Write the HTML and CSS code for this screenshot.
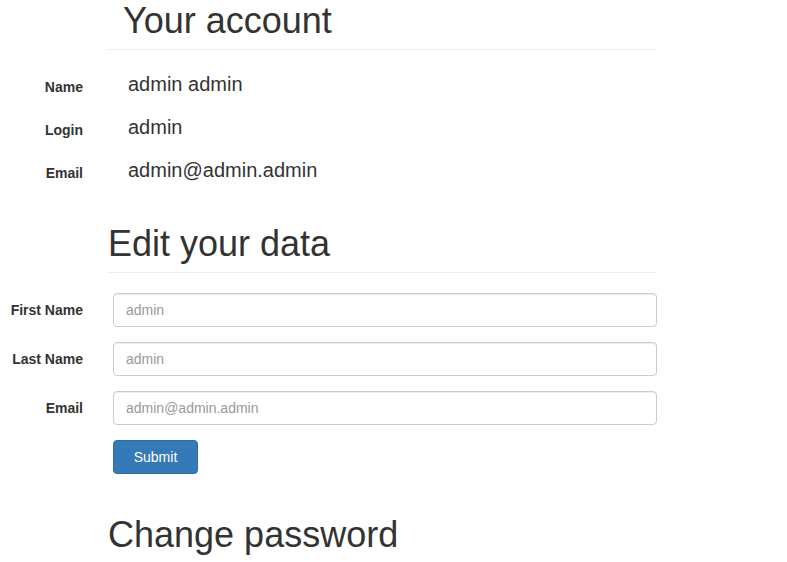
FILE: index.html
```html
<!DOCTYPE html>
<html lang="en">
<head>
<meta charset="utf-8">
<title>Your account</title>
<link rel="stylesheet" href="styles.css">
</head>
<body>
<div class="page">
  <div class="page-header first">
    <h1 class="indented">Your account</h1>
  </div>
  <dl class="details">
    <div class="detail-row"><dt>Name</dt><dd>admin admin</dd></div>
    <div class="detail-row"><dt>Login</dt><dd>admin</dd></div>
    <div class="detail-row"><dt>Email</dt><dd>admin@admin.admin</dd></div>
  </dl>

  <div class="page-header second">
    <h1>Edit your data</h1>
  </div>
  <form class="form-horizontal">
    <div class="form-group">
      <label class="control-label" for="fn">First Name</label>
      <input class="form-control" id="fn" type="text" placeholder="admin">
    </div>
    <div class="form-group">
      <label class="control-label" for="ln">Last Name</label>
      <input class="form-control" id="ln" type="text" placeholder="admin">
    </div>
    <div class="form-group">
      <label class="control-label" for="em">Email</label>
      <input class="form-control" id="em" type="text" placeholder="admin@admin.admin">
    </div>
    <div class="form-group">
      <span></span>
      <div><button type="button" class="btn-primary">Submit</button></div>
    </div>
  </form>

  <div class="page-header third">
    <h1>Change password</h1>
  </div>
</div>
</body>
</html>
```

FILE: styles.css
```css
html, body {
  margin: 0;
  padding: 0;
  background: #fff;
}
body {
  font-family: "Liberation Sans", Arial, sans-serif;
  font-size: 14px;
  line-height: 20px;
  color: #333;
}
.page {
  width: 657px;
}
.page-header {
  margin-left: 108px;
  border-bottom: 1px solid #eee;
}
.page-header h1 {
  margin: 0;
  font-size: 36px;
  font-weight: normal;
  line-height: 40px;
  padding-bottom: 8px;
  color: #333;
}
.page-header h1.indented {
  padding-left: 15px;
}
.page-header.first {
  margin-top: 1px;
}
.page-header.second {
  margin-top: 33px;
}
.page-header.third {
  margin-top: 41px;
}
.details {
  margin: 12px 0 0 0;
  padding: 0;
}
.detail-row {
  display: grid;
  grid-template-columns: 83px 1fr;
  column-gap: 45px;
  align-items: start;
  padding: 7.5px 0;
}
.detail-row dt {
  font-weight: bold;
  text-align: right;
  font-size: 14px;
  line-height: 20px;
  padding-top: 7.5px;
}
.detail-row dd {
  margin: 0;
  font-size: 20px;
  line-height: 28px;
}
.form-horizontal {
  margin-top: 20px;
}
.form-group {
  display: grid;
  grid-template-columns: 83px 544px;
  column-gap: 30px;
  margin-bottom: 15px;
}
.control-label {
  font-weight: bold;
  text-align: right;
  padding-top: 7px;
  line-height: 20px;
}
.form-control {
  display: block;
  box-sizing: border-box;
  width: 544px;
  height: 34px;
  margin: 0;
  padding: 6px 12px;
  font-family: "Liberation Sans", Arial, sans-serif;
  font-size: 14px;
  line-height: 20px;
  color: #555;
  background: #fff;
  border: 1px solid #ccc;
  border-radius: 4px;
  box-shadow: inset 0 1px 1px rgba(0,0,0,.075);
  outline: none;
}
.form-control::placeholder {
  color: #999;
  opacity: 1;
}
.btn-primary {
  display: block;
  box-sizing: border-box;
  width: 85px;
  height: 34px;
  padding: 6px 12px;
  font-family: "Liberation Sans", Arial, sans-serif;
  font-size: 14px;
  line-height: 20px;
  color: #fff;
  background: #337ab7;
  border: 1px solid #2e6da4;
  border-radius: 4px;
  cursor: pointer;
}
```
